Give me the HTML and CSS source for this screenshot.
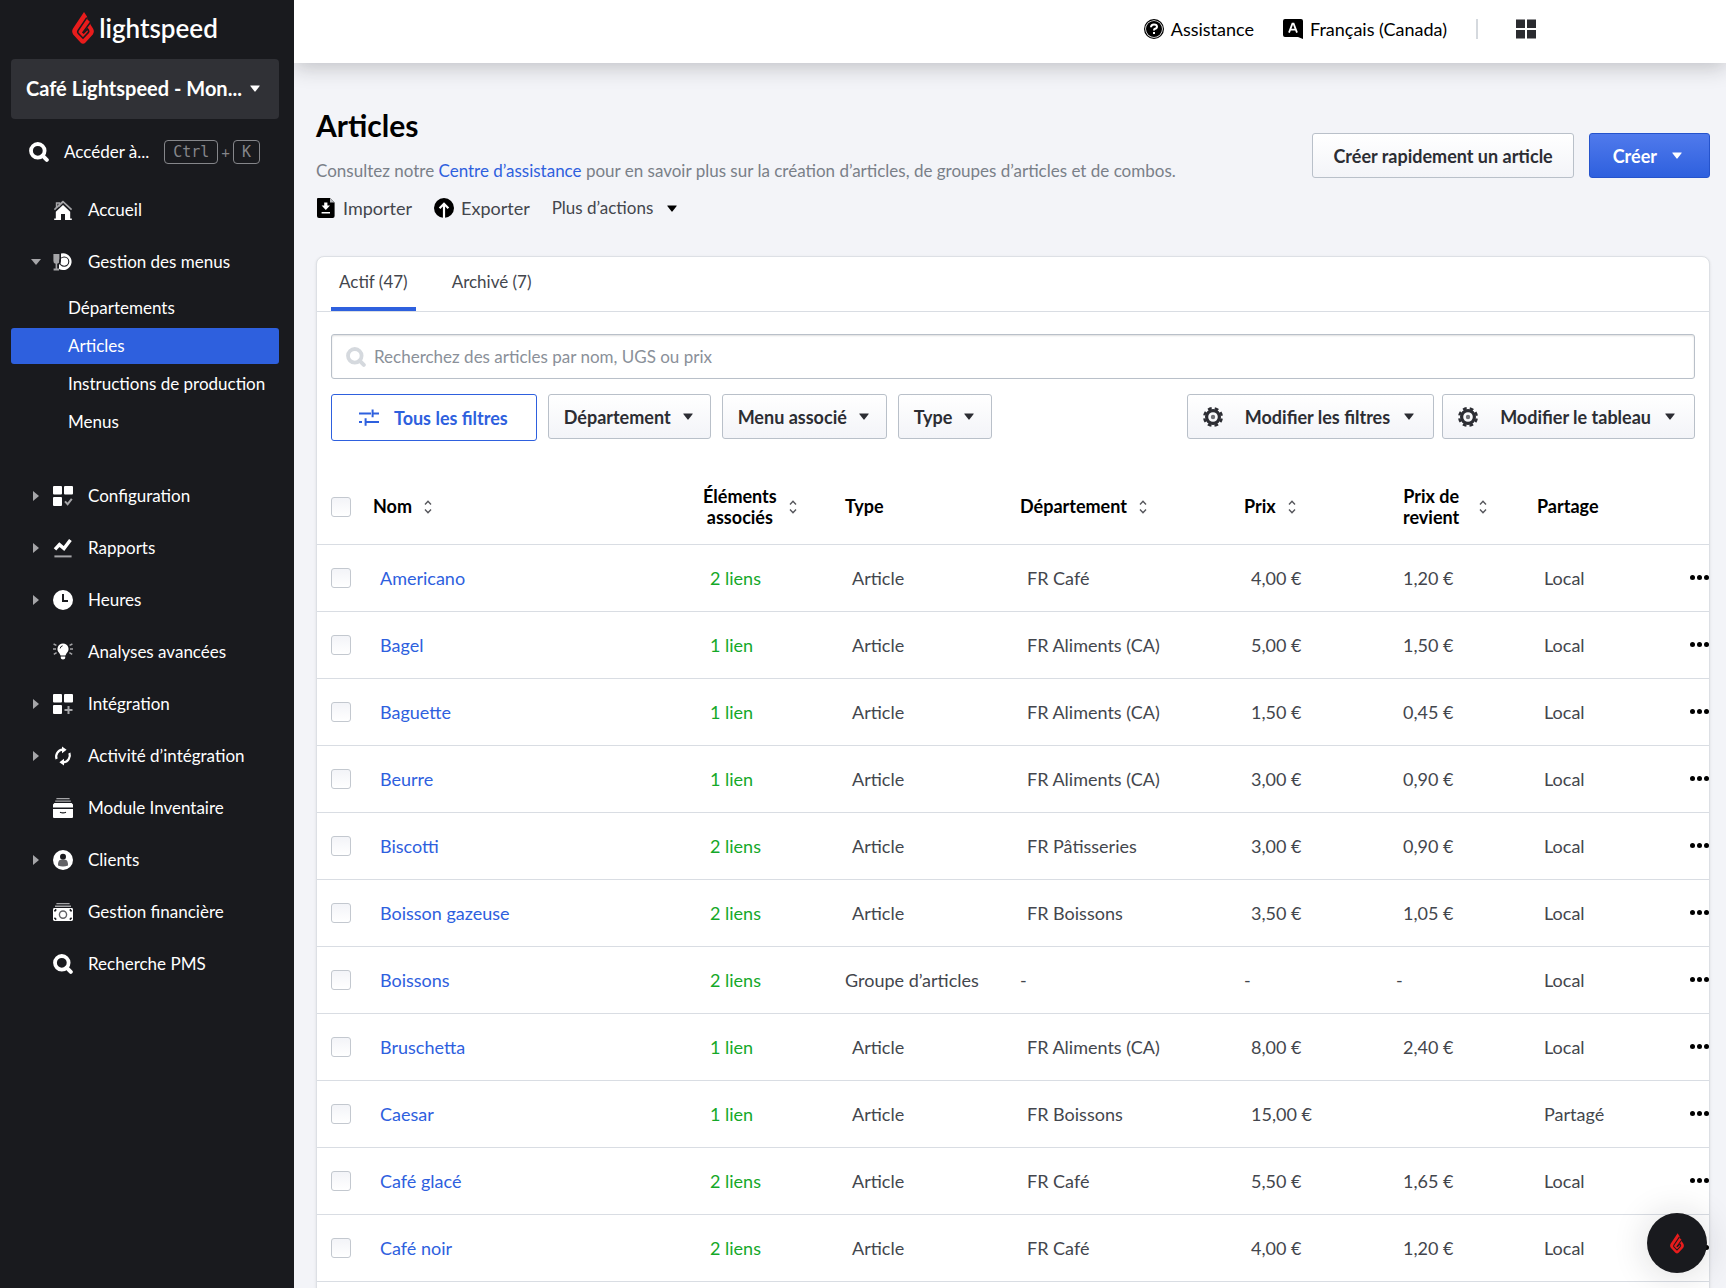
FILE: index.html
```html
<!DOCTYPE html>
<html lang="fr">

<head>
    <meta charset="utf-8">
    <meta name="viewport" content="width=device-width, initial-scale=1">
    <title>Articles</title>
    <link rel="stylesheet" href="styles.css">
</head>

<body>

    <!-- icon shapes shared by the whole page -->
    <svg class="sprite" aria-hidden="true">
        <symbol id="flame" viewBox="0 0 22 32">
            <path class="flame-body" d="M12 0 L1 16.5 Q-0.8 19.5 1.2 22.5 L8.5 30.6 Q11 33 13.5 30.6 L20.8 22.5 Q22.8 19.5 21 16.5 L18.6 12.8 L17.6 9.4 L15.4 7.6 L15 4.6Z" />
            <path class="flame-cut" d="M14.8 5.6 L6 18.6 Q5.2 20 6.2 21.2 L11 26.2 L16.4 20.4 Q17.2 19.4 16.4 18.2 L15.6 17 L11.2 21.4" />
            <path class="flame-cut" d="M18.4 10.4 L10.6 21" />
        </symbol>
        <symbol id="search" viewBox="0 0 20 20">
            <circle cx="8.8" cy="8.8" r="6.8" fill="none" stroke="currentColor" stroke-width="3.8" />
            <path d="M13.6 13.6 L17.8 17.8" stroke="currentColor" stroke-width="4" stroke-linecap="round" />
        </symbol>
        <symbol id="caret" viewBox="0 0 10 7">
            <path d="M0.6 0.4 H9.4 Q10 0.6 9.7 1.1 L5.6 6.3 Q5 7 4.4 6.3 L0.3 1.1 Q0 0.6 0.6 0.4Z" fill="currentColor" />
        </symbol>
        <symbol id="home" viewBox="0 0 20 20">
            <path d="M3.6 8 V3 H6.4 V5.4 L10 1.6 L18.6 9.6" fill="none" stroke="#a5a5a8" stroke-width="1.6" />
            <path d="M10 1.6 L1.4 9.6" stroke="#a5a5a8" stroke-width="1.6" />
            <path d="M10 5 L17.2 11.8 V18.4 H18.8 V20 H12 V14 H8 V20 H1.2 V18.4 H2.8 V11.8Z" fill="#fff" />
        </symbol>
        <symbol id="dish" viewBox="0 0 20 20">
            <path d="M0.4 2 H6.4 V9 Q6.4 11.4 4.2 11.8 V16.6 H6 V18.4 H0.6 V16.6 H2.6 V11.8 Q0.4 11.4 0.4 9Z" fill="#a5a5a8" />
            <path d="M8 1.6 A8.4 8.4 0 1 1 6 17 V13 Q8 11.6 8 9Z" fill="#fff" />
            <circle cx="11.2" cy="9.6" r="4.6" fill="none" stroke="#191a1e" stroke-width="1.1" />
        </symbol>
        <symbol id="grid-check" viewBox="0 0 20 20">
            <rect width="9" height="8.6" rx="1" fill="#fff" />
            <rect x="11" width="9" height="8.6" rx="1" fill="#fff" />
            <rect y="11" width="9" height="9" rx="1" fill="#fff" />
            <path d="M12 15.4 L14.6 18.2 L18.8 12.8" fill="none" stroke="#a5a5a8" stroke-width="2" />
        </symbol>
        <symbol id="grid-plus" viewBox="0 0 20 20">
            <rect width="9" height="8.6" rx="1" fill="#fff" />
            <rect x="11" width="9" height="8.6" rx="1" fill="#fff" />
            <rect y="11" width="9" height="9" rx="1" fill="#fff" />
            <path d="M15.5 12 V20 M11.5 16 H19.5" stroke="#a5a5a8" stroke-width="2" />
        </symbol>
        <symbol id="chart" viewBox="0 0 20 20">
            <path d="M2 11.4 L6.4 6.6 L11 10.6 L17.4 2" fill="none" stroke="#fff" stroke-width="3.4" />
            <path d="M1.4 18.4 H18.6" stroke="#a5a5a8" stroke-width="2" />
        </symbol>
        <symbol id="clock" viewBox="0 0 20 20">
            <circle cx="10" cy="10" r="10" fill="#fff" />
            <path d="M10 4 V11 H15" fill="none" stroke="#191a1e" stroke-width="2" />
        </symbol>
        <symbol id="bulb" viewBox="0 0 20 20">
            <path d="M10 1.4 A5.6 5.6 0 0 1 13.6 11.2 L12.4 13.6 H7.6 L6.4 11.2 A5.6 5.6 0 0 1 10 1.4Z M7.8 14.6 H12.2 V16 Q12.2 17.4 10 17.4 Q7.8 17.4 7.8 16Z" fill="#fff" />
            <path d="M7.2 6.4 Q7.4 4.2 9.6 3.8" fill="none" stroke="#191a1e" />
            <path d="M0.6 2 L3.4 3.4 M0 7 H3 M0.8 12.4 L3.6 10.6 M19.4 2 L16.6 3.4 M20 7 H17 M19.2 12.4 L16.4 10.6" stroke="#a5a5a8" stroke-width="1.4" />
        </symbol>
        <symbol id="sync" viewBox="0 0 20 20">
            <path d="M3.6 13 A7 7 0 0 1 9.6 3.6 M16.4 7 A7 7 0 0 1 10.4 16.4" fill="none" stroke="#fff" stroke-width="2.2" />
            <path d="M9 0.4 L13.6 3.8 L9 7.2Z M11 12.8 L6.4 16.2 L11 19.6Z" fill="#fff" />
        </symbol>
        <symbol id="drawer" viewBox="0 0 20 20">
            <path d="M3.4 0.6 H16.6 M2.2 3.2 H17.8" stroke="#a5a5a8" stroke-width="1.2" />
            <path d="M1.4 5 H18.6 L20 6.4 V9.6 H0 V6.4Z M0 11 H20 V19 Q20 20 19 20 H1 Q0 20 0 19Z" fill="#fff" />
            <path d="M7 14.2 Q10 15.4 13 14.2" fill="none" stroke="#191a1e" stroke-width="1.2" />
        </symbol>
        <symbol id="person" viewBox="0 0 20 20">
            <circle cx="10" cy="10" r="10" fill="#fff" />
            <circle cx="10" cy="6.8" r="3" fill="#191a1e" />
            <path d="M5 15.6 Q4.8 10.4 7.6 9.8 H12.4 Q15.2 10.4 15 15.6 Q10 17.6 5 15.6Z" fill="#626266" />
        </symbol>
        <symbol id="money" viewBox="0 0 20 20">
            <path d="M3.4 1.6 H16.6 M2 4.2 H18" stroke="#a5a5a8" stroke-width="1.4" />
            <rect y="6" width="20" height="13" rx="1.4" fill="#fff" />
            <circle cx="10" cy="12.6" r="3.6" fill="none" stroke="#626266" stroke-width="1.4" />
            <path d="M1.4 9.4 L3.2 7.4 M18.6 9.4 L16.8 7.4 M1.4 15.8 L3.2 17.6 M18.6 15.8 L16.8 17.6" stroke="#191a1e" stroke-width="1.6" />
        </symbol>
        <symbol id="help" viewBox="0 0 20 20">
            <circle cx="10" cy="10" r="9.4" fill="none" stroke="#000" stroke-width="1.2" />
            <circle cx="10" cy="10" r="8" />
            <path d="M7 8.2 Q7 5.4 10 5.4 Q13 5.4 13 7.8 Q13 9.4 10.6 10 Q10 10.2 10 11.6 M10 13 V15" fill="none" stroke="#fff" stroke-width="2" />
        </symbol>
        <symbol id="language" viewBox="0 0 20 20">
            <path d="M2 0 H18 Q20 0 20 2 V20 L15 18 H2 Q0 18 0 16 V2 Q0 0 2 0Z" />
            <path d="M6 13.6 L9.4 4.6 H10.6 L14 13.6 M7.2 10.6 H12.8" fill="none" stroke="#fff" stroke-width="1.8" />
        </symbol>
        <symbol id="apps" viewBox="0 0 20 20">
            <path d="M0 0.5 H9 V9 H0Z M11 0.5 H20 V9 H11Z M0 11 H9 V19.5 H0Z M11 11 H20 V19.5 H11Z" fill="#2a2b2f" />
        </symbol>
        <symbol id="import" viewBox="0 0 20 20">
            <path d="M2 0 H14 L18.6 4.6 V18 Q18.6 20 16.6 20 H3 Q1 20 1 18 V1 Q1 0 2 0Z" />
            <path d="M14 0 L18.6 4.6 H14Z" fill="#b9bbc0" />
            <path d="M8.2 4.6 H11.4 V7.6 H14 L9.8 12 L5.6 7.6 H8.2Z M5.6 14 H14 V15.4 H5.6Z" fill="#fff" />
        </symbol>
        <symbol id="export" viewBox="0 0 20 20">
            <circle cx="10" cy="10" r="10" />
            <path d="M10 20 V6 M5.6 10.2 L10 5.8 L14.4 10.2" fill="none" stroke="#fff" stroke-width="2.2" />
        </symbol>
        <symbol id="sliders" viewBox="0 0 20 20">
            <path d="M0 5.4 H12 M14.6 5.4 H20 M13.6 1.6 V9.2 M0 14 H3 M5.6 14 H20 M6.6 10.2 V17.8" stroke="currentColor" stroke-width="2" fill="none" />
        </symbol>
        <symbol id="gear" viewBox="0 0 20 20">
            <circle cx="10" cy="10" r="6.4" fill="none" stroke="#2c2d33" stroke-width="3.2" />
            <circle cx="10" cy="10" r="8.8" fill="none" stroke="#2c2d33" stroke-width="2.4" stroke-dasharray="3.8 3.11" stroke-dashoffset="-1.5" />
            <circle cx="10" cy="10" r="2.2" fill="#6f7075" />
        </symbol>
        <symbol id="sort" viewBox="0 0 8 14">
            <path d="M1 4.4 L4 1.2 L7 4.4 M1 9.6 L4 12.8 L7 9.6" fill="none" stroke="#55565b" stroke-width="1.4" />
        </symbol>
    </svg>

    <div class="app">
        <aside class="sidebar">
            <a class="logo" href="#">
                <svg class="logo-mark"><use href="#flame" /></svg>
                <span>lightspeed</span>
            </a>

            <button class="location">
                <span class="location-name">Café Lightspeed - Mon...</span>
                <svg class="caret"><use href="#caret" /></svg>
            </button>

            <button class="goto">
                <svg class="icon"><use href="#search" /></svg>
                <span class="goto-label">Accéder à...</span>
                <kbd>Ctrl</kbd><span class="plus">+</span><kbd>K</kbd>
            </button>

            <nav class="nav">
                <a class="nav-item" href="#"><span class="arrow"></span><svg class="icon"><use href="#home" /></svg>Accueil</a>
                <a class="nav-item" href="#"><span class="arrow arrow-down"></span><svg class="icon"><use href="#dish" /></svg>Gestion des menus</a>
                <div class="subnav">
                    <a class="subnav-item" href="#">Départements</a>
                    <a class="subnav-item selected" href="#">Articles</a>
                    <a class="subnav-item" href="#">Instructions de production</a>
                    <a class="subnav-item" href="#">Menus</a>
                </div>
                <a class="nav-item" href="#"><span class="arrow arrow-right"></span><svg class="icon"><use href="#grid-check" /></svg>Configuration</a>
                <a class="nav-item" href="#"><span class="arrow arrow-right"></span><svg class="icon"><use href="#chart" /></svg>Rapports</a>
                <a class="nav-item" href="#"><span class="arrow arrow-right"></span><svg class="icon"><use href="#clock" /></svg>Heures</a>
                <a class="nav-item" href="#"><span class="arrow"></span><svg class="icon"><use href="#bulb" /></svg>Analyses avancées</a>
                <a class="nav-item" href="#"><span class="arrow arrow-right"></span><svg class="icon"><use href="#grid-plus" /></svg>Intégration</a>
                <a class="nav-item" href="#"><span class="arrow arrow-right"></span><svg class="icon"><use href="#sync" /></svg>Activité d’intégration</a>
                <a class="nav-item" href="#"><span class="arrow"></span><svg class="icon"><use href="#drawer" /></svg>Module Inventaire</a>
                <a class="nav-item" href="#"><span class="arrow arrow-right"></span><svg class="icon"><use href="#person" /></svg>Clients</a>
                <a class="nav-item" href="#"><span class="arrow"></span><svg class="icon"><use href="#money" /></svg>Gestion financière</a>
                <a class="nav-item" href="#"><span class="arrow"></span><svg class="icon"><use href="#search" /></svg>Recherche PMS</a>
            </nav>
        </aside>

        <div class="main">
            <header class="topbar">
                <a class="topbar-link" href="#"><svg class="icon"><use href="#help" /></svg>Assistance</a>
                <button class="topbar-link"><svg class="icon"><use href="#language" /></svg>Français (Canada)</button>
                <span class="divider"></span>
                <button class="apps" aria-label="Applications"><svg class="icon"><use href="#apps" /></svg></button>
            </header>

            <main class="content">
                <div class="page-head">
                    <div>
                        <h1 class="title">Articles</h1>
                        <p class="intro">Consultez notre <a href="#">Centre d’assistance</a> pour en savoir plus sur la création d’articles, de groupes d’articles et de combos.</p>
                        <div class="actions">
                            <button class="action"><svg class="icon"><use href="#import" /></svg>Importer</button>
                            <button class="action"><svg class="icon"><use href="#export" /></svg>Exporter</button>
                            <button class="action more">Plus d’actions<svg class="caret"><use href="#caret" /></svg></button>
                        </div>
                    </div>
                    <div class="page-buttons">
                        <button class="button quick">Créer rapidement un article</button>
                        <button class="button primary">Créer<svg class="caret"><use href="#caret" /></svg></button>
                    </div>
                </div>

                <section class="card">
                    <div class="tabs" role="tablist">
                        <button class="tab active" role="tab" aria-selected="true">Actif (47)</button>
                        <button class="tab" role="tab" aria-selected="false">Archivé (7)</button>
                    </div>

                    <label class="search">
                        <svg class="icon"><use href="#search" /></svg>
                        <input type="text" aria-label="Rechercher" placeholder="Recherchez des articles par nom, UGS ou prix">
                    </label>

                    <div class="filters">
                        <button class="button all-filters"><svg class="icon"><use href="#sliders" /></svg>Tous les filtres</button>
                        <button class="button filter">Département<svg class="caret"><use href="#caret" /></svg></button>
                        <button class="button filter">Menu associé<svg class="caret"><use href="#caret" /></svg></button>
                        <button class="button filter">Type<svg class="caret"><use href="#caret" /></svg></button>
                        <div class="table-tools">
                            <button class="button tool"><svg class="icon"><use href="#gear" /></svg>Modifier les filtres<svg class="caret"><use href="#caret" /></svg></button>
                            <button class="button tool"><svg class="icon"><use href="#gear" /></svg>Modifier le tableau<svg class="caret"><use href="#caret" /></svg></button>
                        </div>
                    </div>

                    <table class="items">
                        <colgroup>
                            <col class="col-check">
                            <col class="col-name">
                            <col class="col-links">
                            <col class="col-type">
                            <col class="col-dept">
                            <col class="col-price">
                            <col class="col-cost">
                            <col class="col-share">
                            <col class="col-menu">
                        </colgroup>
                        <thead>
                            <tr>
                                <th><input type="checkbox" aria-label="Tout sélectionner"></th>
                                <th><div class="head">Nom<svg class="sort"><use href="#sort" /></svg></div></th>
                                <th><div class="head"><span class="two-lines">Éléments<br>associés</span><svg class="sort"><use href="#sort" /></svg></div></th>
                                <th>Type</th>
                                <th><div class="head">Département<svg class="sort"><use href="#sort" /></svg></div></th>
                                <th><div class="head">Prix<svg class="sort"><use href="#sort" /></svg></div></th>
                                <th><div class="head cost"><span class="two-lines">Prix de<br>revient</span><svg class="sort"><use href="#sort" /></svg></div></th>
                                <th>Partage</th>
                                <th></th>
                            </tr>
                        </thead>
                        <tbody>
                            <tr>
                                <td><input type="checkbox" aria-label="Americano"></td>
                                <td><a href="#">Americano</a></td>
                                <td><a class="links" href="#">2 liens</a></td>
                                <td>Article</td>
                                <td>FR Café</td>
                                <td>4,00 €</td>
                                <td>1,20 €</td>
                                <td>Local</td>
                                <td><button class="row-menu" aria-label="Actions"><i></i><i></i><i></i></button></td>
                            </tr>
                            <tr>
                                <td><input type="checkbox" aria-label="Bagel"></td>
                                <td><a href="#">Bagel</a></td>
                                <td><a class="links" href="#">1 lien</a></td>
                                <td>Article</td>
                                <td>FR Aliments (CA)</td>
                                <td>5,00 €</td>
                                <td>1,50 €</td>
                                <td>Local</td>
                                <td><button class="row-menu" aria-label="Actions"><i></i><i></i><i></i></button></td>
                            </tr>
                            <tr>
                                <td><input type="checkbox" aria-label="Baguette"></td>
                                <td><a href="#">Baguette</a></td>
                                <td><a class="links" href="#">1 lien</a></td>
                                <td>Article</td>
                                <td>FR Aliments (CA)</td>
                                <td>1,50 €</td>
                                <td>0,45 €</td>
                                <td>Local</td>
                                <td><button class="row-menu" aria-label="Actions"><i></i><i></i><i></i></button></td>
                            </tr>
                            <tr>
                                <td><input type="checkbox" aria-label="Beurre"></td>
                                <td><a href="#">Beurre</a></td>
                                <td><a class="links" href="#">1 lien</a></td>
                                <td>Article</td>
                                <td>FR Aliments (CA)</td>
                                <td>3,00 €</td>
                                <td>0,90 €</td>
                                <td>Local</td>
                                <td><button class="row-menu" aria-label="Actions"><i></i><i></i><i></i></button></td>
                            </tr>
                            <tr>
                                <td><input type="checkbox" aria-label="Biscotti"></td>
                                <td><a href="#">Biscotti</a></td>
                                <td><a class="links" href="#">2 liens</a></td>
                                <td>Article</td>
                                <td>FR Pâtisseries</td>
                                <td>3,00 €</td>
                                <td>0,90 €</td>
                                <td>Local</td>
                                <td><button class="row-menu" aria-label="Actions"><i></i><i></i><i></i></button></td>
                            </tr>
                            <tr>
                                <td><input type="checkbox" aria-label="Boisson gazeuse"></td>
                                <td><a href="#">Boisson gazeuse</a></td>
                                <td><a class="links" href="#">2 liens</a></td>
                                <td>Article</td>
                                <td>FR Boissons</td>
                                <td>3,50 €</td>
                                <td>1,05 €</td>
                                <td>Local</td>
                                <td><button class="row-menu" aria-label="Actions"><i></i><i></i><i></i></button></td>
                            </tr>
                            <tr>
                                <td><input type="checkbox" aria-label="Boissons"></td>
                                <td><a href="#">Boissons</a></td>
                                <td><a class="links" href="#">2 liens</a></td>
                                <td class="flush">Groupe d’articles</td>
                                <td class="flush">-</td>
                                <td class="flush">-</td>
                                <td class="flush">-</td>
                                <td>Local</td>
                                <td><button class="row-menu" aria-label="Actions"><i></i><i></i><i></i></button></td>
                            </tr>
                            <tr>
                                <td><input type="checkbox" aria-label="Bruschetta"></td>
                                <td><a href="#">Bruschetta</a></td>
                                <td><a class="links" href="#">1 lien</a></td>
                                <td>Article</td>
                                <td>FR Aliments (CA)</td>
                                <td>8,00 €</td>
                                <td>2,40 €</td>
                                <td>Local</td>
                                <td><button class="row-menu" aria-label="Actions"><i></i><i></i><i></i></button></td>
                            </tr>
                            <tr>
                                <td><input type="checkbox" aria-label="Caesar"></td>
                                <td><a href="#">Caesar</a></td>
                                <td><a class="links" href="#">1 lien</a></td>
                                <td>Article</td>
                                <td>FR Boissons</td>
                                <td>15,00 €</td>
                                <td></td>
                                <td>Partagé</td>
                                <td><button class="row-menu" aria-label="Actions"><i></i><i></i><i></i></button></td>
                            </tr>
                            <tr>
                                <td><input type="checkbox" aria-label="Café glacé"></td>
                                <td><a href="#">Café glacé</a></td>
                                <td><a class="links" href="#">2 liens</a></td>
                                <td>Article</td>
                                <td>FR Café</td>
                                <td>5,50 €</td>
                                <td>1,65 €</td>
                                <td>Local</td>
                                <td><button class="row-menu" aria-label="Actions"><i></i><i></i><i></i></button></td>
                            </tr>
                            <tr>
                                <td><input type="checkbox" aria-label="Café noir"></td>
                                <td><a href="#">Café noir</a></td>
                                <td><a class="links" href="#">2 liens</a></td>
                                <td>Article</td>
                                <td>FR Café</td>
                                <td>4,00 €</td>
                                <td>1,20 €</td>
                                <td>Local</td>
                                <td><button class="row-menu" aria-label="Actions"><i></i><i></i><i></i></button></td>
                            </tr>
                        </tbody>
                    </table>
                </section>
            </main>
        </div>
    </div>

    <button class="help-button" aria-label="Aide"><svg class="help-mark"><use href="#flame" /></svg></button>

</body>

</html>
```
FILE: styles.css
```css
* {
    box-sizing: border-box;
}

body {
    margin: 0;
    font-family: Lato, "Liberation Sans", sans-serif;
    font-size: 18px;
    line-height: 22px;
    color: #43464d;
    background: #f3f4f8;
}

button,
input {
    font: inherit;
    color: inherit;
}

button {
    padding: 0;
    border: none;
    background: none;
    white-space: nowrap;
    cursor: pointer;
}

a {
    color: #2e60de;
    text-decoration: none;
}

.sprite {
    position: absolute;
    width: 0;
    height: 0;
}

.icon {
    flex: none;
    width: 20px;
    height: 20px;
}

.caret {
    flex: none;
    width: 10px;
    height: 7px;
}

.flame-body {
    fill: #e81c1c;
}

.flame-cut {
    fill: none;
    stroke: #191a1e;
    stroke-width: 1.6;
}

.app {
    display: flex;
    height: 100vh;
    overflow: hidden;
}

/* sidebar */

.sidebar {
    position: relative;
    z-index: 2;
    flex: none;
    width: 294px;
    padding: 10px 15px 0 11px;
    font-size: 17px;
    color: #fff;
    background: #191a1e;
}

.sidebar a {
    color: #fff;
}

.logo {
    display: flex;
    align-items: center;
    justify-content: center;
    gap: 5px;
    height: 36px;
    font-size: 26px;
    font-weight: 600;
}

.logo-mark {
    width: 22px;
    height: 32px;
}

.location {
    display: flex;
    align-items: center;
    justify-content: space-between;
    width: 100%;
    height: 60px;
    margin-top: 13px;
    padding: 0 19px 2px 15px;
    border-radius: 4px;
    background: #303136;
    font-size: 20px;
    font-weight: 700;
}

.goto {
    display: flex;
    align-items: center;
    width: 100%;
    height: 44px;
    margin-top: 11px;
    padding-left: 18px;
}

.goto-label {
    flex: 1;
    padding-left: 15px;
    text-align: left;
}

.goto kbd {
    padding: 0 8px;
    border: 1px solid #85868a;
    border-radius: 4px;
    font-family: "DejaVu Sans Mono", monospace;
    font-size: 15px;
    color: #85868a;
}

.goto kbd:last-child {
    margin-right: 19px;
}

.plus {
    padding: 0 3px;
    font-size: 15px;
    color: #85868a;
}

.nav {
    padding-top: 10px;
}

.nav-item {
    display: flex;
    align-items: center;
    height: 52px;
    padding-left: 20px;
}

.nav-item .icon {
    margin-right: 15px;
}

.arrow {
    width: 22px;
    display: flex;
}

.arrow::before {
    content: "";
    border: 5px solid transparent;
}

.arrow-down::before {
    border-top: 6px solid #a5a5a8;
    border-bottom: none;
}

.arrow-right::before {
    margin-left: 2px;
    border-left: 6px solid #a5a5a8;
    border-right: none;
}

.subnav {
    display: grid;
    gap: 2px;
    padding: 2px 0 30px;
}

.subnav-item {
    display: flex;
    align-items: center;
    height: 36px;
    padding-left: 57px;
    border-radius: 3px;
    white-space: nowrap;
}

.selected {
    background: #2e60de;
}

/* top bar */

.main {
    display: flex;
    flex-direction: column;
    flex: 1;
    min-width: 0;
}

.topbar {
    position: relative;
    z-index: 1;
    display: flex;
    align-items: center;
    justify-content: flex-end;
    flex: none;
    height: 63px;
    padding: 0 190px 5px 20px;
    background: #fff;
    color: #000;
    box-shadow: 0 4px 20px rgba(25, 26, 30, 0.24);
}

.topbar-link {
    display: flex;
    align-items: center;
    gap: 7px;
    margin-right: 29px;
    color: #000;
}

.divider {
    width: 2px;
    height: 20px;
    margin-right: 38px;
    background: #d5d9de;
}

.apps {
    height: 20px;
}

/* page head */

.content {
    flex: 1;
    min-height: 0;
    padding: 44px 16px 0 22px;
    overflow-y: auto;
    scrollbar-width: none;
}

.page-head {
    display: flex;
    justify-content: space-between;
    margin-bottom: 37px;
}

.title {
    margin: 0 0 17px;
    font-size: 30px;
    line-height: 36px;
    font-weight: 700;
    color: #000;
}

.intro {
    margin: 0;
    font-size: 17px;
    color: #7a8088;
}

.actions {
    display: flex;
    align-items: center;
    gap: 22px;
    margin-top: 15px;
}

.action {
    display: flex;
    align-items: center;
    gap: 7px;
}

.more {
    gap: 14px;
    font-size: 17px;
}

.more .caret {
    color: #000;
}

.page-buttons {
    display: flex;
    gap: 15px;
    flex: none;
    margin-top: 26px;
}

.button {
    display: flex;
    align-items: center;
    height: 45px;
    border: 1px solid #b9c0c9;
    border-radius: 3px;
    background: linear-gradient(#fff, #f3f4f8);
    font-weight: 700;
    color: #2c2d33;
}

.quick {
    padding: 0 20px;
}

.primary {
    gap: 15px;
    padding: 0 27px 0 23px;
    border-color: #2553cc;
    background: linear-gradient(#507aec, #2e60de);
    color: #fff;
}

/* list card */

.card {
    overflow: hidden;
    padding-bottom: 67px;
    border: 1px solid #dde0e5;
    border-radius: 8px;
    background: #fff;
    box-shadow: 0 1px 3px rgba(25, 26, 30, 0.1);
}

.tabs {
    display: flex;
    gap: 28px;
    height: 55px;
    padding: 0 14px;
    border-bottom: 1px solid #d9dde3;
    font-size: 17px;
}

.tab {
    padding: 0 8px;
    border-bottom: 4px solid transparent;
}

.active {
    border-bottom-color: #2e60de;
}

.search {
    display: flex;
    align-items: center;
    gap: 8px;
    height: 45px;
    margin: 22px 14px 15px;
    padding: 0 14px;
    border: 1px solid #b9c0c9;
    border-radius: 3px;
    box-shadow: inset 0 1px 2px rgba(25, 26, 30, 0.14);
    font-size: 17px;
    color: #d5d9de;
}

.search input {
    flex: 1;
    padding: 0;
    border: none;
    outline: none;
    background: none;
    color: #43464d;
}

.search input::placeholder {
    color: #8a9099;
    opacity: 1;
}

.filters {
    display: flex;
    gap: 11px;
    height: 47px;
    padding: 0 14px;
}

.all-filters {
    gap: 15px;
    height: 47px;
    padding: 0 28px 0 27px;
    border-color: #2e60de;
    background: #fff;
    color: #2e60de;
}

.filter {
    gap: 12px;
    padding: 0 17px 0 15px;
}

.table-tools {
    display: flex;
    gap: 8px;
    margin-left: auto;
}

.tool {
    padding: 0 19px 0 15px;
}

.tool .icon {
    margin-right: 22px;
}

.tool .caret {
    margin-left: 14px;
}

/* items table */

.items {
    width: 100%;
    margin-top: 29px;
    border-collapse: collapse;
    table-layout: fixed;
}

.col-check {
    width: 56px;
}

.col-links {
    width: 142px;
}

.col-type {
    width: 175px;
}

.col-dept {
    width: 224px;
}

.col-price {
    width: 152px;
}

.col-cost {
    width: 141px;
}

.col-share {
    width: 153px;
}

.col-menu {
    width: 19px;
}

.items th {
    height: 74px;
    padding: 0;
    border-bottom: 1px solid #d9dde3;
    text-align: left;
    font-weight: 700;
    line-height: 21px;
    color: #000;
}

.items td {
    height: 67px;
    padding: 0 0 0 7px;
    border-bottom: 1px solid #d9dde3;
    white-space: nowrap;
}

.items .flush {
    padding-left: 0;
}

.items th:first-child,
.items td:first-child {
    padding-left: 14px;
}

.items td:last-child {
    padding: 0;
}

.head {
    display: flex;
    align-items: center;
    gap: 12px;
}

.cost {
    gap: 20px;
    padding-left: 7px;
}

.two-lines {
    text-align: center;
}

.sort {
    width: 8px;
    height: 14px;
}

.items input {
    display: block;
    width: 20px;
    height: 20px;
    margin: 0;
    appearance: none;
    border: 1px solid #c3c8cf;
    border-radius: 3px;
    background: linear-gradient(#f3f4f8, #fff);
}

.links {
    color: #15a829;
}

.row-menu {
    display: flex;
    gap: 2px;
}

.row-menu i {
    width: 5px;
    height: 5px;
    border-radius: 50%;
    background: #000;
}

/* floating help */

.help-button {
    position: fixed;
    right: 19px;
    bottom: 15px;
    z-index: 3;
    display: flex;
    align-items: center;
    justify-content: center;
    width: 60px;
    height: 60px;
    border-radius: 50%;
    background: #191a1e;
    box-shadow: 0 2px 36px rgba(25, 26, 30, 0.16);
}

.help-mark {
    width: 14px;
    height: 21px;
}
```
